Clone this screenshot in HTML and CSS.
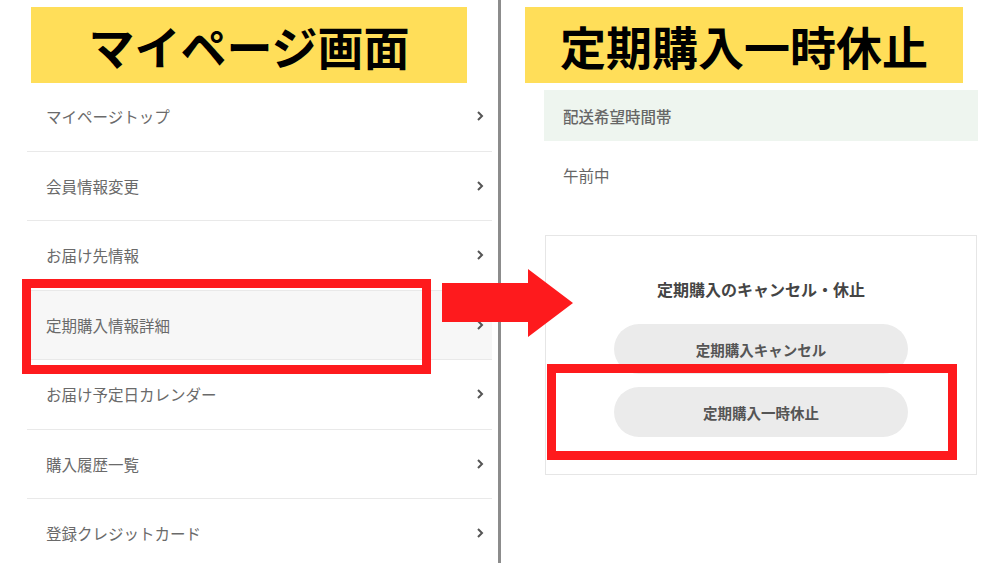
FILE: index.html
```html
<!DOCTYPE html>
<html lang="ja">
<head>
<meta charset="utf-8">
<link rel="stylesheet" href="styles.css">
</head>
<body>
<div class="page">
  <section class="panel left">
    <div class="banner banner-left">マイページ画面</div>
    <ul class="menu">
      <li class="menu-item"><span>マイページトップ</span><svg class="chev" viewBox="0 0 8 12"><polyline points="2,2 6,6 2,10"/></svg></li>
      <li class="menu-item"><span>会員情報変更</span><svg class="chev" viewBox="0 0 8 12"><polyline points="2,2 6,6 2,10"/></svg></li>
      <li class="menu-item"><span>お届け先情報</span><svg class="chev" viewBox="0 0 8 12"><polyline points="2,2 6,6 2,10"/></svg></li>
      <li class="menu-item active"><span>定期購入情報詳細</span><svg class="chev" viewBox="0 0 8 12"><polyline points="2,2 6,6 2,10"/></svg></li>
      <li class="menu-item"><span>お届け予定日カレンダー</span><svg class="chev" viewBox="0 0 8 12"><polyline points="2,2 6,6 2,10"/></svg></li>
      <li class="menu-item"><span>購入履歴一覧</span><svg class="chev" viewBox="0 0 8 12"><polyline points="2,2 6,6 2,10"/></svg></li>
      <li class="menu-item"><span>登録クレジットカード</span><svg class="chev" viewBox="0 0 8 12"><polyline points="2,2 6,6 2,10"/></svg></li>
    </ul>
  </section>
  <div class="divider"></div>
  <section class="panel right">
    <div class="banner banner-right">定期購入一時休止</div>
    <div class="info-head">配送希望時間帯</div>
    <div class="info-value">午前中</div>
    <div class="card">
      <div class="card-title">定期購入のキャンセル・休止</div>
      <div class="btn">定期購入キャンセル</div>
      <div class="btn btn-second">定期購入一時休止</div>
    </div>
  </section>
  <div class="hl hl-left"></div>
  <div class="hl hl-right"></div>
  <svg class="arrow" viewBox="0 0 131 68"><polygon points="0,14 86,14 86,0 131,34 86,68 86,53 0,53"/></svg>
</div>
</body>
</html>
```
FILE: styles.css
```css
html, body {
  margin: 0;
  padding: 0;
  background: #fff;
}
.page {
  position: relative;
  width: 1000px;
  height: 563px;
  overflow: hidden;
  display: flex;
  font-family: "Noto Sans CJK JP", "Noto Sans", sans-serif;
}
.panel {
  display: flex;
  flex-direction: column;
}
.panel > * {
  flex-shrink: 0;
}
.left {
  width: 498px;
}
.divider {
  width: 3px;
  background: #8c8c8c;
  flex-shrink: 0;
}
.right {
  flex: 1;
}
.banner {
  margin-top: 7px;
  height: 76px;
  background: #ffde59;
  color: #000;
  font-weight: 700;
  font-size: 46px;
  display: flex;
  align-items: center;
  justify-content: center;
  line-height: 1;
}
.banner-left {
  margin-left: 31px;
  width: 436px;
}
.banner-right {
  margin-left: 24px;
  width: 438px;
}
.menu {
  list-style: none;
  margin: -1px 0 0 27px;
  padding: 0;
  width: 465px;
}
.menu-item {
  height: 68.5px;
  border-bottom: 1px solid #e9e9e9;
  display: flex;
  align-items: center;
  justify-content: space-between;
  padding: 0 8px 0 19px;
  font-size: 15.5px;
  color: #6a6a6a;
}
.menu-item.active {
  background: #f7f7f7;
}
.chev {
  width: 8px;
  height: 12px;
}
.chev polyline {
  fill: none;
  stroke: #555;
  stroke-width: 2;
}
.info-head {
  margin: 7px 0 0 43px;
  width: 434px;
  height: 51px;
  background: #eef5ef;
  color: #666;
  font-size: 15.5px;
  font-weight: 500;
  display: flex;
  align-items: center;
  padding-left: 19px;
  box-sizing: border-box;
}
.info-value {
  margin-left: 43px;
  padding-left: 19px;
  height: 68px;
  display: flex;
  align-items: center;
  font-size: 15.5px;
  color: #666;
}
.card {
  margin: 26px 0 0 44px;
  width: 432px;
  height: 240px;
  box-sizing: border-box;
  border: 1px solid #e6e6e6;
  display: flex;
  flex-direction: column;
  align-items: center;
  padding-top: 42px;
}
.card-title {
  font-size: 16px;
  font-weight: 700;
  color: #444;
  line-height: 22px;
}
.btn {
  margin-top: 24px;
  width: 294px;
  height: 50px;
  border-radius: 25px;
  background: #ebebeb;
  color: #555;
  font-size: 14.5px;
  font-weight: 700;
  display: flex;
  align-items: center;
  justify-content: center;
}
.btn-second {
  margin-top: 13px;
}
.hl {
  position: absolute;
  border: 9px solid #fe1a1d;
  box-sizing: border-box;
}
.hl-left {
  left: 22px;
  top: 279px;
  width: 409px;
  height: 95px;
}
.hl-right {
  left: 547px;
  top: 364px;
  width: 410px;
  height: 96px;
}
.arrow {
  position: absolute;
  left: 442px;
  top: 269px;
  width: 131px;
  height: 68px;
}
.arrow polygon {
  fill: #fe1a1d;
}
```
